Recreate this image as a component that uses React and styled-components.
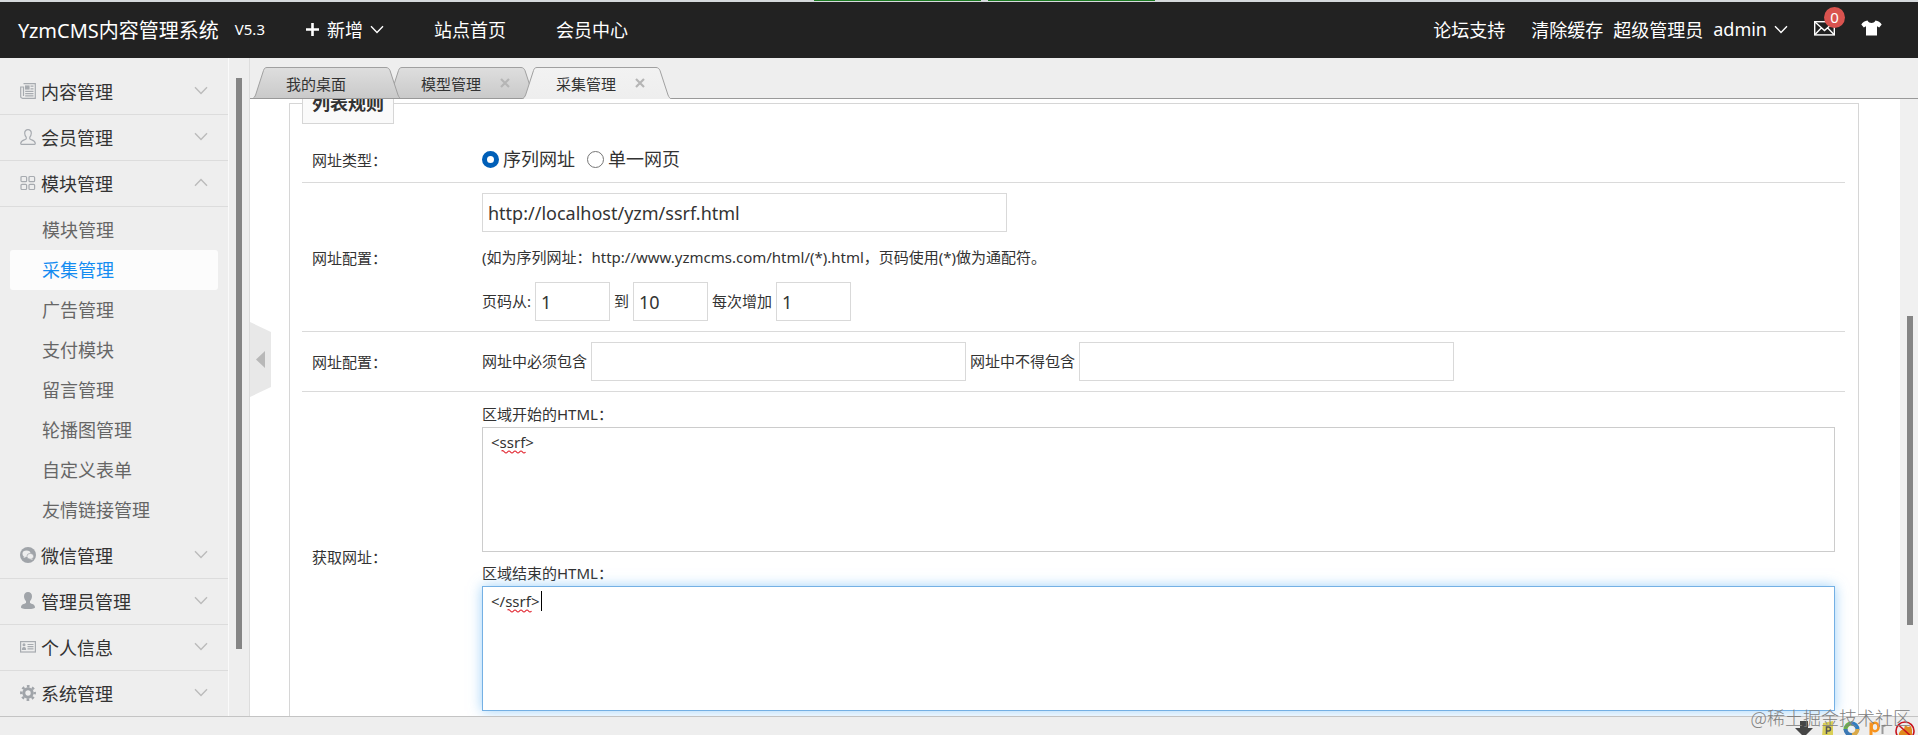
import React, { useState } from "react";
import styled, { createGlobalStyle, css } from "styled-components";

const subMenus = [
  "模块管理",
  "采集管理",
  "广告管理",
  "支付模块",
  "留言管理",
  "轮播图管理",
  "自定义表单",
  "友情链接管理",
];

const menus = [
  { name: "内容管理", icon: NewsIcon },
  { name: "会员管理", icon: UserLineIcon },
  { name: "模块管理", icon: ModuleIcon, subMenus },
  { name: "微信管理", icon: WechatIcon },
  { name: "管理员管理", icon: UserIcon },
  { name: "个人信息", icon: CardIcon },
  { name: "系统管理", icon: GearIcon },
];

const tabs = [
  { name: "我的桌面" },
  { name: "模型管理", closable: true },
  { name: "采集管理", closable: true },
];

export default function App() {
  const [openMenu, setOpenMenu] = useState("模块管理");
  const [activeSub, setActiveSub] = useState("采集管理");
  const [activeTab, setActiveTab] = useState("采集管理");

  return (
    <Page>
      <GlobalStyle />
      <WindowEdge>
        <Progress />
        <Progress />
      </WindowEdge>

      <Header>
        <Logo href="#">YzmCMS内容管理系统</Logo>
        <Version>V5.3</Version>
        <Nav>
          <NavButton>
            <PlusIcon />
            新增
            <Chevron />
          </NavButton>
          <NavLink href="#">站点首页</NavLink>
          <NavLink href="#">会员中心</NavLink>
        </Nav>
        <UserBar>
          <NavLink href="#">论坛支持</NavLink>
          <UserGroup>
            <NavLink href="#">清除缓存</NavLink>
            <span>超级管理员</span>
            <NavButton>
              admin
              <Chevron />
            </NavButton>
          </UserGroup>
          <IconButton aria-label="消息">
            <MailIcon />
            <Badge>0</Badge>
          </IconButton>
          <IconButton aria-label="换肤">
            <ShirtIcon />
          </IconButton>
        </UserBar>
      </Header>

      <Body>
        <Sidebar>
          <Menu>
            {menus.map(({ name, icon: Icon, subMenus }) => {
              const open = openMenu === name && subMenus;
              return (
                <li key={name}>
                  <MenuButton onClick={() => setOpenMenu(open ? "" : name)}>
                    <Icon />
                    <MenuText>{name}</MenuText>
                    <Chevron $up={open} />
                  </MenuButton>
                  {open && (
                    <SubMenu>
                      {subMenus.map((sub) => (
                        <li key={sub}>
                          <SubMenuLink
                            href="#"
                            $active={sub === activeSub}
                            onClick={() => setActiveSub(sub)}
                          >
                            {sub}
                          </SubMenuLink>
                        </li>
                      ))}
                    </SubMenu>
                  )}
                </li>
              );
            })}
          </Menu>
          <SideTrack>
            <SideThumb />
          </SideTrack>
        </Sidebar>

        <Main>
          <TabBar>
            {tabs.map(({ name, closable }, i) => {
              const active = name === activeTab;
              return (
                <Tab key={name} $order={active ? 9 : tabs.length - i}>
                  <TabShape active={active} id={`tab-${i}`} />
                  <TabName onClick={() => setActiveTab(name)}>{name}</TabName>
                  {closable && (
                    <TabClose aria-label="关闭">
                      <CloseIcon />
                    </TabClose>
                  )}
                </Tab>
              );
            })}
          </TabBar>

          <Panel>
            <Content>
              <Rules>
                <Legend>列表规则</Legend>
                <Row>
                  <RowLabel>网址类型：</RowLabel>
                  <Choices>
                    <Choice>
                      <Radio type="radio" name="type" defaultChecked />
                      序列网址
                    </Choice>
                    <Choice>
                      <Radio type="radio" name="type" />
                      单一网页
                    </Choice>
                  </Choices>
                </Row>
                <Row>
                  <RowLabel as="label" htmlFor="url">
                    网址配置：
                  </RowLabel>
                  <Cell>
                    <Input
                      id="url"
                      $width="525px"
                      defaultValue="http://localhost/yzm/ssrf.html"
                    />
                    <Hint>
                      (如为序列网址：http://www.yzmcms.com/html/(*).html，页码使用(*)做为通配符。
                    </Hint>
                    <Fields>
                      <FieldLabel htmlFor="from">页码从:</FieldLabel>
                      <Input id="from" $width="75px" defaultValue="1" />
                      <FieldLabel htmlFor="to">到</FieldLabel>
                      <Input id="to" $width="75px" defaultValue="10" />
                      <FieldLabel htmlFor="step">每次增加</FieldLabel>
                      <Input id="step" $width="75px" defaultValue="1" />
                    </Fields>
                  </Cell>
                </Row>
                <Row>
                  <RowLabel>网址配置：</RowLabel>
                  <Fields>
                    <FieldLabel htmlFor="include">网址中必须包含</FieldLabel>
                    <Input id="include" $width="375px" />
                    <FieldLabel htmlFor="exclude">网址中不得包含</FieldLabel>
                    <Input id="exclude" $width="375px" />
                  </Fields>
                </Row>
                <Row>
                  <RowLabel>获取网址：</RowLabel>
                  <Areas>
                    <AreaGroup>
                      <AreaLabel htmlFor="start">区域开始的HTML：</AreaLabel>
                      <AreaBox>
                        <TextArea id="start" defaultValue="<ssrf>" />
                        <Squiggle $left="19px">
                          <Wave />
                        </Squiggle>
                      </AreaBox>
                    </AreaGroup>
                    <AreaGroup>
                      <AreaLabel htmlFor="end">区域结束的HTML：</AreaLabel>
                      <AreaBox>
                        <TextArea id="end" $focused defaultValue="</ssrf>" />
                        <Squiggle $left="25px">
                          <Wave />
                        </Squiggle>
                        <Caret />
                      </AreaBox>
                    </AreaGroup>
                  </Areas>
                </Row>
              </Rules>
            </Content>
            <PanelTrack>
              <PanelThumb />
            </PanelTrack>
            <Collapse aria-label="收起">
              <svg width="21" height="75" viewBox="0 0 21 75">
                <path d="M0 0L21 10V65L0 75Z" fill="#e8e8e8" />
                <path d="M6 37.500L15 29V46Z" fill="#b8b8b8" />
              </svg>
            </Collapse>
          </Panel>
        </Main>
      </Body>

      <StatusBar>
        <StatusIcons>
          <DownloadIcon />
          <NoteIcon />
          <SwirlIcon />
          <PiIcon />
          <BlockedIcon />
        </StatusIcons>
        <Watermark>@稀土掘金技术社区</Watermark>
      </StatusBar>
    </Page>
  );
}

/* icons */

function Chevron({ $up }) {
  return (
    <ChevronSvg $up={$up} width="14" height="9" viewBox="0 0 14 9">
      <path d="M1 1.200L7 7.400L13 1.200" fill="none" stroke="currentColor" strokeWidth="1.400" />
    </ChevronSvg>
  );
}

function PlusIcon() {
  return (
    <svg width="15" height="15" viewBox="0 0 15 15">
      <path d="M7.500 1V14M1 7.500H14" stroke="#fff" strokeWidth="2.600" />
    </svg>
  );
}

function MailIcon() {
  return (
    <svg width="21" height="15" viewBox="0 0 21 15" fill="none" stroke="#fff" strokeWidth="1.400">
      <rect x="0.700" y="0.700" width="19.600" height="13.200" />
      <path d="M1 1L10.500 9.500L20 1M1 13.500L7.500 6.800M20 13.500L13.500 6.800" />
    </svg>
  );
}

function ShirtIcon() {
  return (
    <svg width="21" height="16" viewBox="0 0 21 16" fill="#fff">
      <path d="M6.500 0.500C7.500 2.300 9 3 10.500 3S13.500 2.300 14.500 0.500C17 1 19.500 2.200 20.700 4.500L18.200 7.400L16 6.300V15.500H5V6.300L2.800 7.400L0.300 4.500C1.500 2.200 4 1 6.500 0.500Z" />
    </svg>
  );
}

function NewsIcon() {
  return (
    <svg width="16" height="16" viewBox="0 0 16 16" fill="none" stroke="#a7abb0" strokeWidth="1.200">
      <path d="M3.500 0.700H15.300V15.300H2.500C1.400 15.300 0.700 14.400 0.700 13.400V4H3.500V13" />
      <rect x="5.600" y="3" width="3.400" height="3" fill="#a7abb0" />
      <path d="M10.500 3.200H13.500M10.500 5.800H13.500M5.200 8.300H13.500M5.200 10.600H13.500M5.200 12.900H13.500" />
    </svg>
  );
}

function UserLineIcon() {
  return (
    <svg width="16" height="16" viewBox="0 0 16 16" fill="none" stroke="#a7abb0" strokeWidth="1.200">
      <path d="M8 0.700C5.800 0.700 4.600 2.300 4.700 4.300C4.800 6 5.300 7.300 6.200 8.200V9.800C5 11.200 1 11 0.700 14.500C0.700 15 0.900 15.300 1.400 15.300H14.600C15.100 15.300 15.300 15 15.300 14.500C15 11 11 11.200 9.800 9.800V8.200C10.700 7.300 11.200 6 11.300 4.300C11.400 2.300 10.200 0.700 8 0.700Z" />
    </svg>
  );
}

function ModuleIcon() {
  return (
    <svg width="16" height="16" viewBox="0 0 16 16" fill="none" stroke="#a7abb0" strokeWidth="1.200">
      <rect x="1" y="1.500" width="5.600" height="5.200" rx="1" />
      <rect x="9" y="1.500" width="5.600" height="5.200" rx="1" />
      <rect x="1" y="9.300" width="5.600" height="5.200" rx="1" />
      <rect x="9" y="9.300" width="5.600" height="5.200" rx="1" />
    </svg>
  );
}

function WechatIcon() {
  return (
    <svg width="16" height="16" viewBox="0 0 16 16">
      <circle cx="8" cy="8" r="8" fill="#a0a4a9" />
      <ellipse cx="6.500" cy="6.800" rx="4" ry="3.300" fill="#eee" />
      <ellipse cx="10.300" cy="9.300" rx="3.400" ry="2.900" fill="#eee" stroke="#a0a4a9" strokeWidth="0.700" />
      <path d="M4 9L3.600 11L6 9.900ZM12 11.500L12.700 13L10.300 12Z" fill="#eee" />
    </svg>
  );
}

function UserIcon() {
  return (
    <svg width="16" height="17" viewBox="0 0 16 17" fill="#a0a4a9">
      <path d="M8 0C5.500 0 4 1.700 4 4.200C4 6.300 4.900 8 6 9V11C4.500 12 1 12 1 15.500C1 16.300 3 17 8 17S15 16.300 15 15.500C15 12 11.500 12 10 11V9C11.100 8 12 6.300 12 4.200C12 1.700 10.500 0 8 0Z" />
    </svg>
  );
}

function CardIcon() {
  return (
    <svg width="16" height="12" viewBox="0 0 16 12" fill="none" stroke="#a7abb0" strokeWidth="1.200">
      <rect x="0.600" y="0.600" width="14.800" height="10.400" />
      <path d="M7.500 3.500H13.500M7.500 5.700H13.500M7.500 7.900H13.500" />
      <circle cx="4" cy="3.800" r="0.900" fill="#a7abb0" />
      <path d="M2.500 8.300C2.500 6 5.500 6 5.500 8.300Z" fill="#a7abb0" />
    </svg>
  );
}

function GearIcon() {
  return (
    <svg width="16" height="16" viewBox="0 0 16 16" fill="none" stroke="#a0a4a9">
      <circle cx="8" cy="8" r="4.200" strokeWidth="3" />
      <circle
        cx="8"
        cy="8"
        r="6.700"
        strokeWidth="2.500"
        strokeDasharray="2.630 2.630"
        strokeDashoffset="1.300"
      />
    </svg>
  );
}

function CloseIcon() {
  return (
    <svg width="10" height="10" viewBox="0 0 10 10">
      <path d="M1 1L9 9M9 1L1 9" stroke="currentColor" strokeWidth="2.200" />
    </svg>
  );
}

function TabShape({ active, id }) {
  return (
    <ShapeSvg width="150" height="32" viewBox="0 0 150 32">
      <linearGradient id={id} x1="0" y1="0" x2="0" y2="1">
        <stop offset="0" stopColor={active ? "#f2f2f2" : "#dedede"} />
        <stop offset="1" stopColor={active ? "#eeeeee" : "#c9c9c9"} />
      </linearGradient>
      <path
        d="M0.500 32C2 31 3 29.500 3.600 28L11.500 3.500C12.200 1.500 13 0.500 15 0.500H134C136 0.500 137 1.500 138 3.500L146 28C147 30.500 148 31.500 149.500 32"
        fill={`url(#${id})`}
        stroke="#a0a0a0"
      />
      {!active && <path d="M0 31.500H150" stroke="#999" />}
    </ShapeSvg>
  );
}

function Wave() {
  return (
    <svg width="25" height="4" viewBox="0 0 25 4">
      <path
        d="M0.500 1Q2 0 3.500 2T6.500 2T9.500 2T12.500 2T15.500 2T18.500 2T21.500 2T24.500 2"
        fill="none"
        stroke="#e0202b"
        strokeWidth="1.100"
      />
    </svg>
  );
}

function DownloadIcon() {
  return (
    <svg width="18" height="16" viewBox="0 0 18 16">
      <path d="M5 0H13V7H18L9 16L0 7H5Z" fill="#454545" />
    </svg>
  );
}

function NoteIcon() {
  return (
    <svg width="12" height="16" viewBox="0 0 12 16">
      <path d="M1 2L11 0V16H0Z" fill="#d9cf55" />
      <path d="M4.500 13V6H6.500A1.800 1.800 0 0 1 6.500 10H4.500" fill="none" stroke="#555" strokeWidth="1.500" />
    </svg>
  );
}

function SwirlIcon() {
  return (
    <svg width="17" height="16" viewBox="0 0 17 16" fill="none" strokeWidth="4">
      <path d="M2.500 9A6 6 0 0 1 9 2.500" stroke="#6bb04a" />
      <path d="M8 2.500A6 6 0 0 1 14.500 9" stroke="#2f7fc0" />
      <path d="M14.500 8A6 6 0 0 1 8 14" stroke="#d9a94a" />
      <path d="M9 14A6 6 0 0 1 2.500 8" stroke="#3c78b4" />
      <circle cx="8.500" cy="8" r="2" fill="#eaf3fa" />
    </svg>
  );
}

function PiIcon() {
  return (
    <svg width="17" height="16" viewBox="0 0 17 16" fill="none">
      <path d="M2 16V1.500" stroke="#f7931e" strokeWidth="3" />
      <ellipse cx="6" cy="6" rx="3.500" ry="4.300" stroke="#f7931e" strokeWidth="2.600" />
      <path d="M13.500 4V13M13.500 6Q14.500 4.500 16.500 4.500" stroke="#999" strokeWidth="2" />
    </svg>
  );
}

function BlockedIcon() {
  return (
    <svg width="20" height="16" viewBox="0 0 20 16">
      <path d="M4 16C3 11 6 9 9 8L10 4L13 6L16 5L17 9V16Z" fill="#e08a1e" />
      <circle cx="10" cy="10" r="9" fill="none" stroke="#c8141e" strokeWidth="1.600" />
      <path d="M3.500 4L17 16" stroke="#c8141e" strokeWidth="1.600" />
    </svg>
  );
}

/* page */

const GlobalStyle = createGlobalStyle`
  * {
    box-sizing: border-box;
  }

  body {
    margin: 0;
    font-family: "Noto Sans", "Noto Sans CJK SC", sans-serif;
    font-size: 15px;
    color: #333;
  }

  button {
    padding: 0;
    border: 0;
    background: none;
    color: inherit;
    font: inherit;
    cursor: pointer;
  }

  ul {
    margin: 0;
    padding: 0;
    list-style: none;
  }

  a {
    color: inherit;
    text-decoration: none;
  }

  svg {
    flex: none;
    display: block;
  }
`;

const Page = styled.div`
  display: flex;
  flex-direction: column;
  height: 100vh;
  overflow: hidden;
  background-color: #eee;
`;

const WindowEdge = styled.div`
  display: flex;
  justify-content: center;
  gap: 7px;
  height: 2px;
  padding-left: 51px;
  background-color: #d5d9dc;
`;

const Progress = styled.div`
  width: 167px;
  height: 1px;
  background-color: #1c7a22;
`;

const Header = styled.header`
  display: flex;
  align-items: center;
  flex: none;
  height: 56px;
  padding: 0 36px 2px 18px;
  background-color: #222;
  color: #fff;
  font-size: 18px;
  white-space: nowrap;
`;

const Logo = styled.a`
  font-size: 20px;
`;

const Version = styled.span`
  margin-left: 16px;
  font-size: 15px;
`;

const Nav = styled.nav`
  display: flex;
  align-items: center;
  gap: 50px;
  margin-left: 40px;
`;

const NavLink = styled.a`
  &:hover {
    color: #ccc;
  }
`;

const NavButton = styled.button`
  display: flex;
  align-items: center;
  gap: 7px;
`;

const UserBar = styled.div`
  display: flex;
  align-items: center;
  gap: 26px;
  margin-left: auto;
`;

const UserGroup = styled.div`
  display: flex;
  align-items: center;
  gap: 10px;
`;

const IconButton = styled.button`
  position: relative;
  padding-bottom: 2px;
`;

const Badge = styled.span`
  position: absolute;
  top: -14px;
  left: 10px;
  width: 21px;
  height: 21px;
  border-radius: 50%;
  background-color: #d9534f;
  font-size: 15px;
  line-height: 21px;
  text-align: center;
`;

const ChevronSvg = styled.svg`
  transform: ${({ $up }) => ($up ? "rotate(180deg)" : "none")};
`;

const Body = styled.div`
  display: flex;
  flex: 1;
  min-height: 0;
`;

/* sidebar */

const Sidebar = styled.aside`
  display: flex;
  flex: none;
  width: 250px;
  overflow: hidden;
  border-right: 1px solid #ddd;
`;

const Menu = styled.ul`
  flex: 1;
  padding-top: 11px;
  border-right: 1px solid #fafafa;
`;

const MenuButton = styled.button`
  display: flex;
  align-items: center;
  gap: 5px;
  width: 100%;
  height: 46px;
  padding: 0 20px 2px;
  border-bottom: 1px solid #dcdcdc;
  color: #bbb;
  font-size: 18px;
`;

const MenuText = styled.span`
  flex: 1;
  color: #333;
  text-align: left;
`;

const SubMenu = styled.ul`
  padding: 3px 10px;
`;

const SubMenuLink = styled.a`
  display: block;
  padding-left: 32px;
  border-radius: 3px;
  font-size: 18px;
  line-height: 40px;
  color: #666;

  ${({ $active }) =>
    $active &&
    css`
      background-color: #fcfcfc;
      color: #148cf1;
    `}
`;

const SideTrack = styled.div`
  width: 20px;
  padding: 20px 6px 67px 7px;
`;

const SideThumb = styled.div`
  width: 6px;
  height: 100%;
  background-color: #858585;
`;

/* tabs */

const Main = styled.main`
  display: flex;
  flex: 1;
  flex-direction: column;
  min-width: 0;
`;

const TabBar = styled.div`
  display: flex;
  flex: none;
  height: 41px;
  padding: 9px 0 0 2px;
  border-bottom: 1px solid #999;
`;

const Tab = styled.div`
  position: relative;
  z-index: ${({ $order }) => $order};
  display: flex;
  align-items: center;
  gap: 19px;
  width: 150px;
  height: 32px;
  margin-right: -15px;
  padding-left: 34px;
`;

const ShapeSvg = styled.svg`
  position: absolute;
  inset: 0;
`;

const TabName = styled.button`
  position: relative;
`;

const TabClose = styled.button`
  position: relative;
  color: #b5b5b5;
`;

/* panel */

const Panel = styled.div`
  position: relative;
  display: flex;
  flex: 1;
  min-height: 0;
  overflow: hidden;
  background-color: #fff;
`;

const Content = styled.div`
  flex: 1;
  padding: 0 41px 0 39px;
`;

const PanelTrack = styled.div`
  display: grid;
  grid-template-rows: 217fr 309fr 91fr;
  width: 18px;
  padding: 0 5px 0 7px;
  background-color: #f0f0f0;
`;

const PanelThumb = styled.div`
  grid-row: 2;
  background-color: #858585;
`;

const Collapse = styled.button`
  position: absolute;
  top: calc(50% - 86px);
  left: 0;
`;

const Rules = styled.fieldset`
  margin: -16px 0 0;
  padding: 0 13px 12px 12px;
  border: 1px solid #d6d6d6;
`;

const Legend = styled.legend`
  margin-bottom: 12px;
  padding: 0 9px;
  border: 1px solid #d6d6d6;
  background-color: #fafafa;
  font-size: 18px;
  font-weight: bold;
  line-height: 39px;
`;

const Row = styled.div`
  display: flex;
  align-items: center;
  padding: 10px;
  border-bottom: 1px solid #dadada;
`;

const RowLabel = styled.span`
  flex: none;
  width: 170px;
`;

const Cell = styled.div`
  flex: 1;
`;

const Choices = styled.div`
  display: flex;
  gap: 12px;
`;

const Choice = styled.label`
  display: flex;
  align-items: center;
  gap: 4px;
  font-size: 18px;
  line-height: 26px;
`;

const Radio = styled.input`
  appearance: none;
  width: 17px;
  height: 17px;
  margin: 0;
  border: 1px solid #767676;
  border-radius: 50%;
  background-color: #fff;

  &:checked {
    border: 5px solid #005fb8;
  }
`;

const Fields = styled.div`
  display: flex;
  align-items: center;
  gap: 4px;
`;

const FieldLabel = styled.label`
  padding-bottom: 2px;
`;

const Input = styled.input`
  width: ${({ $width }) => $width};
  height: 39px;
  padding: 0 5px;
  border: 1px solid #d9d9d9;
  background-color: #fff;
  color: #333;
  font: inherit;
  font-size: 18px;
  outline: none;
`;

const Hint = styled.p`
  margin: 0;
  line-height: 50px;
`;

const Areas = styled.div`
  display: flex;
  flex: 1;
  flex-direction: column;
  gap: 9px;
`;

const AreaGroup = styled.div`
  display: flex;
  flex-direction: column;
`;

const AreaLabel = styled.label`
  line-height: 25px;
`;

const AreaBox = styled.div`
  position: relative;
`;

const TextArea = styled.textarea`
  display: block;
  width: 100%;
  height: 125px;
  padding: 3px 8px;
  border: 1px solid #ccc;
  color: #333;
  font: inherit;
  line-height: 22px;
  resize: none;
  outline: none;

  ${({ $focused }) =>
    $focused &&
    css`
      border-color: #74b0e4;
      box-shadow: 0 0 12px rgba(94, 178, 245, 0.6);
    `}
`;

const Squiggle = styled.span`
  position: absolute;
  top: 23px;
  left: ${({ $left }) => $left};
`;

const Caret = styled.span`
  position: absolute;
  top: 5px;
  left: 59px;
  width: 1px;
  height: 20px;
  background-color: #000;
`;

/* bottom bar */

const StatusBar = styled.footer`
  position: relative;
  display: flex;
  justify-content: flex-end;
  flex: none;
  height: 19px;
  border-top: 1px solid #c4c4c4;
`;

const StatusIcons = styled.div`
  display: flex;
  gap: 9px;
  padding: 4px 3px 0 0;
`;

const Watermark = styled.span`
  position: absolute;
  right: 7px;
  bottom: 5px;
  color: #808080;
  font-family: "Noto Sans CJK SC", sans-serif;
  font-size: 18px;
  font-weight: 300;
  line-height: 26px;
`;
